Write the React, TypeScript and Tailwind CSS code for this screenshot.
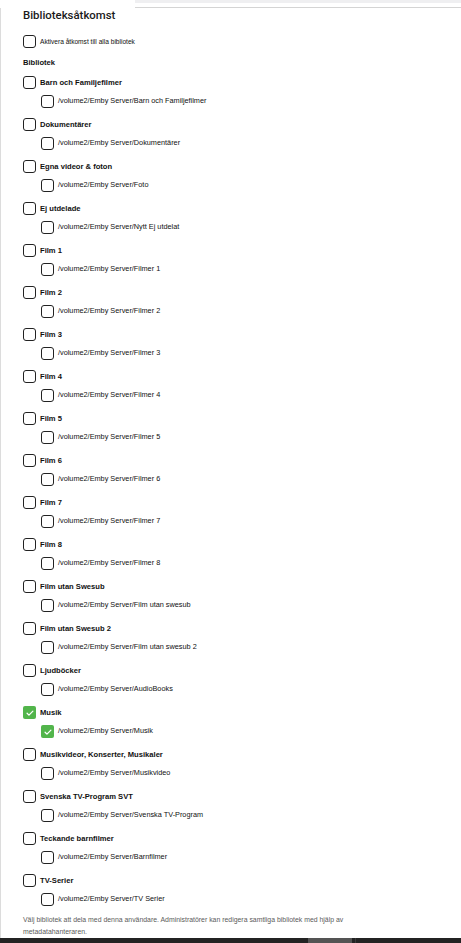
import React from "react";

interface Library {
    name: string;
    path: string;
    checked?: boolean;
}

const libraries: Library[] = [
    { name: "Barn och Familjefilmer", path: "/volume2/Emby Server/Barn och Familjefilmer" },
    { name: "Dokumentärer", path: "/volume2/Emby Server/Dokumentärer" },
    { name: "Egna videor & foton", path: "/volume2/Emby Server/Foto" },
    { name: "Ej utdelade", path: "/volume2/Emby Server/Nytt Ej utdelat" },
    { name: "Film 1", path: "/volume2/Emby Server/Filmer 1" },
    { name: "Film 2", path: "/volume2/Emby Server/Filmer 2" },
    { name: "Film 3", path: "/volume2/Emby Server/Filmer 3" },
    { name: "Film 4", path: "/volume2/Emby Server/Filmer 4" },
    { name: "Film 5", path: "/volume2/Emby Server/Filmer 5" },
    { name: "Film 6", path: "/volume2/Emby Server/Filmer 6" },
    { name: "Film 7", path: "/volume2/Emby Server/Filmer 7" },
    { name: "Film 8", path: "/volume2/Emby Server/Filmer 8" },
    { name: "Film utan Swesub", path: "/volume2/Emby Server/Film utan swesub" },
    { name: "Film utan Swesub 2", path: "/volume2/Emby Server/Film utan swesub 2" },
    { name: "Ljudböcker", path: "/volume2/Emby Server/AudioBooks" },
    { name: "Musik", path: "/volume2/Emby Server/Musik", checked: true },
    { name: "Musikvideor, Konserter, Musikaler", path: "/volume2/Emby Server/Musikvideo" },
    { name: "Svenska TV-Program SVT", path: "/volume2/Emby Server/Svenska TV-Program" },
    { name: "Teckande barnfilmer", path: "/volume2/Emby Server/Barnfilmer" },
    { name: "TV-Serier", path: "/volume2/Emby Server/TV Serier" },
];

function Box({ checked }: { checked?: boolean }) {
    if (checked) {
        return (
            <span className="w-[13px] h-[13px] rounded-[2px] bg-[#52b54b] flex items-center justify-center shrink-0">
                <svg width="10" height="10" viewBox="0 0 24 24" fill="none" stroke="white" strokeWidth="3" strokeLinecap="round" strokeLinejoin="round">
                    <path d="M5 12.5l4.5 4.5L19 7.5" />
                </svg>
            </span>
        );
    }
    return <span className="w-[13px] h-[13px] rounded-[3px] border-[1.5px] border-[#222] shrink-0" />;
}

export default function App() {
    return (
        <div className="w-[461px] h-[943px] bg-white overflow-hidden flex flex-col" style={{ fontFamily: '"Liberation Sans", Arial, sans-serif' }}>
            <div className="h-[8px] flex shrink-0">
                <div className="w-[135px]" />
                <div className="flex-1 flex flex-col">
                    <div className="h-[3px] bg-[#efeff1]" />
                    <div className="h-[4px]" />
                    <div className="h-[1px] bg-[#d4d4d4]" />
                </div>
            </div>
            <div className="flex-1 border-l border-[#dcdcdc] pl-[22px] text-[#111]">
                <h2 className="text-[11.4px] leading-[14px] font-medium font-[Roboto,sans-serif] text-[#1a1a1a]">Biblioteksåtkomst</h2>
                <label className="mt-[13px] h-[13px] flex items-center gap-[4px]">
                    <Box />
                    <span className="text-[6.6px]">Aktivera åtkomst till alla bibliotek</span>
                </label>
                <div className="mt-[10px] text-[7.6px] leading-[10px] font-bold">Bibliotek</div>
                <div className="mt-[8px] flex flex-col gap-[10px]">
                    {libraries.map((lib) => (
                        <div key={lib.name} className="flex flex-col gap-[6px]">
                            <label className="h-[13px] flex items-center gap-[4px]">
                                <Box checked={lib.checked} />
                                <span className="text-[7.6px] font-bold">{lib.name}</span>
                            </label>
                            <label className="h-[13px] pl-[18px] flex items-center gap-[4px]">
                                <Box checked={lib.checked} />
                                <span className="text-[7.3px]">{lib.path}</span>
                            </label>
                        </div>
                    ))}
                </div>
                <p className="mt-[8px] text-[6.9px] leading-[12px] text-[#5a5a5a]">
                    Välj bibliotek att dela med denna användare. Administratörer kan redigera samtliga bibliotek med hjälp av
                    <br />
                    metadatahanteraren.
                </p>
            </div>
            <div className="h-[8px] bg-[#232323] flex shrink-0">
                <div className="w-[308px]" />
                <div className="w-[44px] bg-[#545454]" />
                <div className="w-[3px]" />
                <div className="w-[1px] bg-[#3a3a3a]" />
            </div>
        </div>
    );
}
